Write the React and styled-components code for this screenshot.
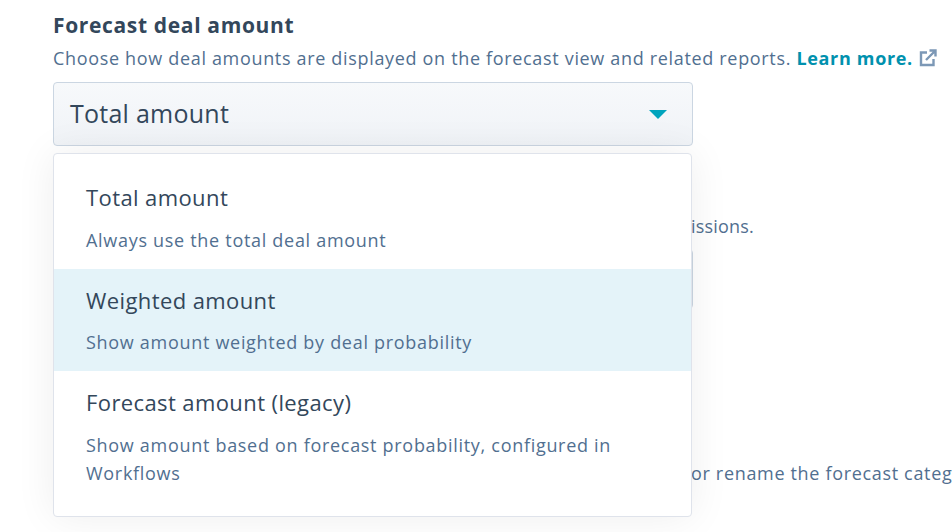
import React from "react";
import styled, { createGlobalStyle } from "styled-components";

const GlobalStyle = createGlobalStyle`
	html, body {
		margin: 0;
		height: 100%;
		background: #fff;
		overflow: hidden;
	}
	body {
		font-family: "Open Sans", "Liberation Sans", sans-serif;
		color: #33475b;
	}
`;

const Page = styled.div`
	width: 952px;
	height: 532px;
	padding: 11px 0 0 53px;
	box-sizing: border-box;
	overflow: hidden;
`;

const Title = styled.h2`
	margin: 0;
	font-size: 21px;
	line-height: 28px;
	font-weight: 700;
	letter-spacing: 0.65px;
	color: #33475b;
`;

const Description = styled.p`
	margin: 5px 0 0;
	font-size: 18px;
	line-height: 28px;
	letter-spacing: 0.67px;
	color: #516f90;
	white-space: nowrap;
`;

const LearnMore = styled.a`
	font-weight: 700;
	color: #0091ae;
	text-decoration: none;
`;

const ExternalIcon = styled.svg`
	width: 18px;
	height: 18px;
	margin-left: 6px;
	vertical-align: -2px;
	fill: none;
	stroke: #7c98b6;
	stroke-width: 2.4;
`;

const SelectWrap = styled.div`
	position: relative;
	width: 640px;
	margin-top: 10px;
`;

const SelectButton = styled.div`
	height: 64px;
	box-sizing: border-box;
	padding: 0 25px 2px 16px;
	display: flex;
	align-items: center;
	justify-content: space-between;
	border: 1px solid #cbd6e2;
	border-radius: 4px;
	background: linear-gradient(180deg, #f7f9fb 0%, #f0f3f7 100%);
	font-size: 25px;
	letter-spacing: 0.25px;
	color: #33475b;
`;

const Caret = styled.span`
	width: 0;
	height: 0;
	margin-top: 2px;
	border-left: 9px solid transparent;
	border-right: 9px solid transparent;
	border-top: 9px solid #00a4bd;
`;

const Menu = styled.ul`
	position: absolute;
	top: 71px;
	left: 0;
	width: 639px;
	height: 364px;
	box-sizing: border-box;
	margin: 0;
	padding: 12px 0 0;
	list-style: none;
	background: #fff;
	border: 1px solid #dfe3eb;
	border-radius: 4px;
	box-shadow: 0 0 40px rgba(0, 0, 0, 0.07);
`;

const Option = styled.li`
	padding: 16px 32px 0;
	height: ${(p) => (p.$tall ? "auto" : "102.5px")};
	box-sizing: border-box;
	background: ${(p) => (p.$active ? "#e4f3f9" : "transparent")};
`;

const OptionTitle = styled.div`
	font-size: 22px;
	line-height: 30px;
	letter-spacing: 0.4px;
	color: #33475b;
`;

const OptionHint = styled.div`
	margin-top: 13.5px;
	font-size: 18px;
	line-height: 28px;
	letter-spacing: 0.7px;
	color: #516f90;
`;

const BehindText = styled.p`
	margin: ${(p) => p.$top}px 0 0;
	padding-left: 638px;
	font-size: 18px;
	line-height: 28px;
	letter-spacing: ${(p) => p.$spacing}px;
	color: #516f90;
	white-space: nowrap;
`;

const BehindField = styled.div`
	width: 640px;
	height: 60px;
	margin-top: 9px;
	box-sizing: border-box;
	border: 1px solid #cbd6e2;
	border-radius: 4px;
`;

const options = [
	{ title: "Total amount", hint: "Always use the total deal amount" },
	{ title: "Weighted amount", hint: "Show amount weighted by deal probability", active: true },
	{
		title: "Forecast amount (legacy)",
		hint: "Show amount based on forecast probability, configured in Workflows",
		tall: true,
	},
];

const App = () => (
	<Page>
		<GlobalStyle />
		<Title>Forecast deal amount</Title>
		<Description>
			Choose how deal amounts are displayed on the forecast view and related reports.{" "}
			<LearnMore href="#">Learn more.</LearnMore>
			<ExternalIcon viewBox="0 0 18 18">
				<path d="M8 3.5H2v12.5h12.500V10" />
				<path d="M7 11L16 2M10.500 1.500H16.500V7.500" />
			</ExternalIcon>
		</Description>
		<SelectWrap>
			<SelectButton>
				Total amount
				<Caret />
			</SelectButton>
			<Menu>
				{options.map((o) => (
					<Option key={o.title} $active={o.active} $tall={o.tall}>
						<OptionTitle>{o.title}</OptionTitle>
						<OptionHint>{o.hint}</OptionHint>
					</Option>
				))}
			</Menu>
		</SelectWrap>
		<BehindText $top={66} $spacing={0.2}>issions.</BehindText>
		<BehindField />
		<BehindText $top={150} $spacing={0.67}>or rename the forecast categories</BehindText>
	</Page>
);

export default App;
